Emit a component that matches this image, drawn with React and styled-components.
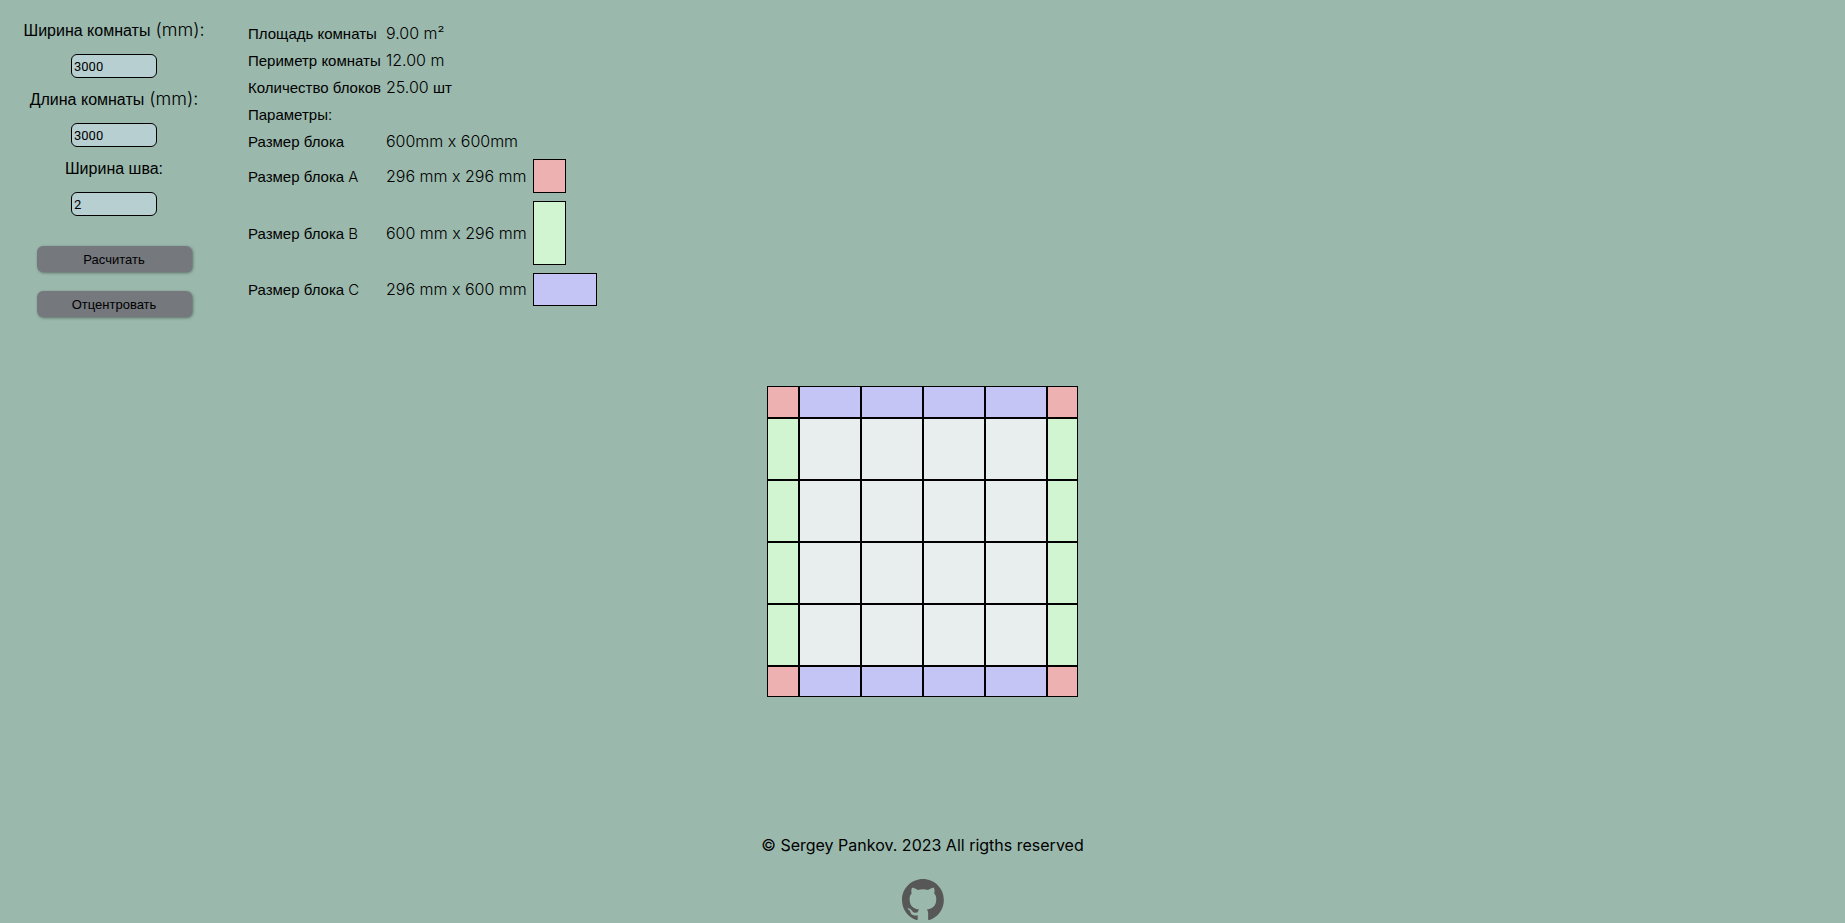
import React, { useState } from "react";
import styled, { createGlobalStyle } from "styled-components";

const palette = {
  background: "#9ab8ac",
  input: "#b7cfd0",
  button: "#75797e",
  A: "#ecb1b0",
  B: "#d1f4d1",
  C: "#c5c5f5",
  full: "#e8eeed",
};

const GlobalStyle = createGlobalStyle`
  *, *::before, *::after { box-sizing: border-box; }
  body {
    margin: 0;
    background: ${palette.background};
    color: #000;
    font-family: "Liberation Sans", Arial, sans-serif;
    font-size: 16px;
    line-height: 24px;
  }
`;

const Page = styled.div`
  display: flex;
  flex-direction: column;
  min-height: 100vh;
`;

const Header = styled.header`
  display: flex;
  align-items: flex-start;
  padding-top: 19px;
`;

const Form = styled.form`
  display: flex;
  flex-direction: column;
  align-items: center;
  flex: none;
  width: 228px;
  margin-right: 15px;
`;

const Field = styled.div`
  display: flex;
  flex-direction: column;
  align-items: center;
  gap: 11px;
  margin-bottom: 10px;
`;

const Latin = styled.span`
  font-family: Inter, sans-serif;
  font-size: ${({ $size }) => $size}px;
  font-weight: 300;
  line-height: 1;
`;

const Input = styled.input`
  width: 86px;
  height: 24px;
  padding: 1px 2px;
  border: 1px solid #000;
  border-radius: 6px;
  background: ${palette.input};
  color: #000;
  font: 13px Roboto, sans-serif;
`;

const Actions = styled.div`
  display: flex;
  flex-direction: column;
  gap: 19px;
  margin-top: 20px;
`;

const Button = styled.button`
  width: 155px;
  height: 26px;
  padding: 0;
  border: 0;
  border-radius: 6px;
  background: ${palette.button};
  box-shadow: 1px 1px 3px rgba(0, 0, 0, 0.4);
  color: #000;
  font: 13px "Liberation Sans", Arial, sans-serif;
  cursor: pointer;
`;

const Summary = styled.table`
  border-spacing: 2px;
  font-size: 15px;
  line-height: 19px;
`;

const Name = styled.th`
  min-width: 135px;
  padding: 3px 0 3px 3px;
  font-weight: 400;
  text-align: left;
  white-space: nowrap;
`;

const Value = styled.td`
  min-width: 145px;
  padding: 3px 0 3px 3px;
  white-space: nowrap;
`;

const SwatchCell = styled.td`
  padding: 3px;
`;

const Swatch = styled.div`
  width: ${({ $width }) => $width}px;
  height: ${({ $height }) => $height}px;
  border: 1px solid #000;
  background: ${({ $kind }) => palette[$kind]};
`;

const Main = styled.main`
  display: flex;
  justify-content: center;
  margin-top: 69px;
`;

const Board = styled.div`
  display: grid;
  grid-template-columns: 32px repeat(4, 62px) 31px;
  grid-template-rows: 32px repeat(4, 62px) 31px;
`;

const Tile = styled.div`
  border: 1px solid #000;
  background: ${({ $kind }) => palette[$kind]};
`;

const Footer = styled.footer`
  display: flex;
  flex-direction: column;
  align-items: center;
  gap: 22px;
  margin-top: 136px;
`;

const Copyright = styled.p`
  margin: 0;
  font-family: Inter, sans-serif;
  font-weight: 400;
`;

const GithubLink = styled.a`
  display: block;
  height: 42px;
  color: #575757;
`;

const fields = [
  { id: "width", label: "Ширина комнаты", unit: "(mm):", value: "3000" },
  { id: "length", label: "Длина комнаты", unit: "(mm):", value: "3000" },
  { id: "seam", label: "Ширина шва:", value: "2" },
];

const rows = [
  { name: "Площадь комнаты", value: "9.00 m²" },
  { name: "Периметр комнаты", value: "12.00 m" },
  { name: "Количество блоков", value: "25.00", suffix: " шт" },
  { name: "Параметры:" },
  { name: "Размер блока", value: "600mm x 600mm" },
  { name: "Размер блока", kind: "A", value: "296 mm x 296 mm", width: 33, height: 34 },
  { name: "Размер блока", kind: "B", value: "600 mm x 296 mm", width: 33, height: 64 },
  { name: "Размер блока", kind: "C", value: "296 mm x 600 mm", width: 64, height: 33 },
];

const SIZE = 6;
const tiles = Array.from({ length: SIZE * SIZE }, (_, index) => {
  const edgeColumn = index % SIZE === 0 || index % SIZE === SIZE - 1;
  const line = Math.floor(index / SIZE);
  const edgeRow = line === 0 || line === SIZE - 1;
  if (edgeColumn && edgeRow) return "A";
  if (edgeColumn) return "B";
  return edgeRow ? "C" : "full";
});

function GithubMark() {
  return (
    <svg width="42" height="42" viewBox="0 0 98 98" fill="currentColor" aria-hidden="true">
      <path
        fillRule="evenodd"
        d="M48.854 0C21.839 0 0 22 0 49.217c0 21.756 13.993 40.172 33.405 46.69 2.427.49 3.316-1.059 3.316-2.362 0-1.141-.08-5.052-.08-9.127-13.59 2.934-16.42-5.867-16.42-5.867-2.184-5.704-5.42-7.17-5.42-7.17-4.448-3.015.324-3.015.324-3.015 4.934.326 7.523 5.052 7.523 5.052 4.367 7.496 11.404 5.378 14.235 4.074.404-3.178 1.699-5.378 3.074-6.6-10.839-1.141-22.243-5.378-22.243-24.283 0-5.378 1.94-9.778 5.014-13.2-.485-1.222-2.184-6.275.486-13.038 0 0 4.125-1.304 13.426 5.052a46.97 46.97 0 0 1 12.214-1.63c4.125 0 8.33.571 12.213 1.63 9.302-6.356 13.427-5.052 13.427-5.052 2.67 6.763.97 11.816.485 13.038 3.155 3.422 5.015 7.822 5.015 13.2 0 18.905-11.404 23.06-22.324 24.283 1.78 1.548 3.316 4.481 3.316 9.126 0 6.6-.08 11.897-.08 13.526 0 1.304.89 2.853 3.316 2.364 19.412-6.52 33.405-24.935 33.405-46.691C97.707 22 75.788 0 48.854 0z"
      />
    </svg>
  );
}

export default function App() {
  const [values, setValues] = useState(() =>
    Object.fromEntries(fields.map((field) => [field.id, field.value]))
  );

  return (
    <Page>
      <GlobalStyle />
      <Header>
        <Form onSubmit={(event) => event.preventDefault()}>
          {fields.map(({ id, label, unit }) => (
            <Field key={id}>
              <label htmlFor={id}>
                {label}
                {unit && <Latin $size={18}> {unit}</Latin>}
              </label>
              <Input
                id={id}
                value={values[id]}
                onChange={(event) => setValues({ ...values, [id]: event.target.value })}
              />
            </Field>
          ))}
          <Actions>
            <Button type="submit">Расчитать</Button>
            <Button type="button">Отцентровать</Button>
          </Actions>
        </Form>
        <Summary>
          <tbody>
            {rows.map(({ name, kind, value, suffix, width, height }) => (
              <tr key={name + (kind || "")}>
                <Name scope="row">
                  {name}
                  {kind && <Latin $size={15}> {kind}</Latin>}
                </Name>
                <Value>
                  <Latin $size={16}>{value}</Latin>
                  {suffix}
                </Value>
                {kind && (
                  <SwatchCell>
                    <Swatch $kind={kind} $width={width} $height={height} />
                  </SwatchCell>
                )}
              </tr>
            ))}
          </tbody>
        </Summary>
      </Header>
      <Main>
        <Board>
          {tiles.map((kind, index) => (
            <Tile key={index} $kind={kind} />
          ))}
        </Board>
      </Main>
      <Footer>
        <Copyright>© Sergey Pankov. 2023 All rigths reserved</Copyright>
        <GithubLink href="https://github.com" aria-label="GitHub">
          <GithubMark />
        </GithubLink>
      </Footer>
    </Page>
  );
}
